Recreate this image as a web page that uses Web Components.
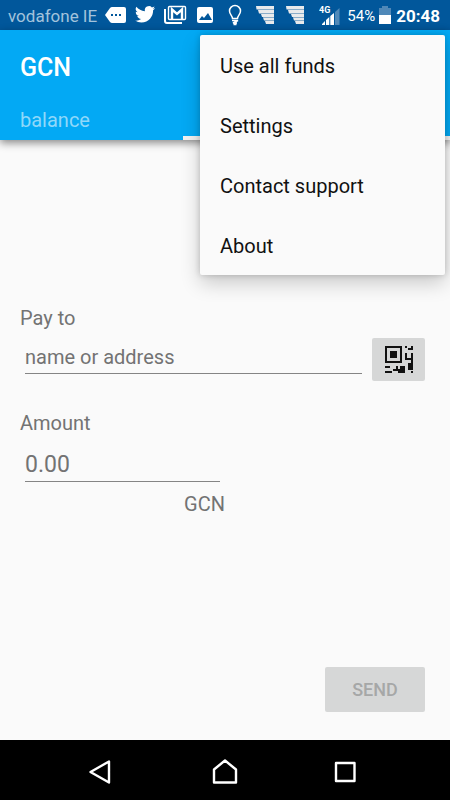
<!DOCTYPE html>
<html lang="en">
<head>
<meta charset="utf-8">
<meta name="viewport" content="width=device-width, initial-scale=1">
<title>GCN wallet</title>
<style>
  body {
    margin: 0;
    font-family: Roboto, sans-serif;
    font-size: 20px;
    line-height: 24px;
    color: #737373;
    background: #fafafa;
  }
</style>
</head>
<body>
<wallet-app></wallet-app>

<script>
class StatusBar extends HTMLElement {
  constructor() {
    super();
    this.attachShadow({ mode: 'open' });
    this.shadowRoot.innerHTML = `
      <style>
        :host {
          display: flex;
          align-items: center;
          height: 30px;
          padding: 0 10px 0 8px;
          background: #01579b;
          color: #fff;
          white-space: nowrap;
        }
        svg { display: block; flex: none; }
        .carrier { width: 92px; padding-top: 2px; font-size: 17px; color: #a3c3dc; }
        .notes, .system { display: flex; align-items: center; }
        .system { margin-left: auto; padding-top: 1px; }
        .percent { margin: 0 4px 0 7px; font-size: 15px; }
        .clock { margin-left: 5px; font-size: 17px; font-weight: 700; }
      </style>
      <span class="carrier">vodafone IE</span>
      <div class="notes">
        <svg width="30" height="30" viewBox="0 0 30 30">
          <path fill="#fff" d="M5 15l5-7q1-1 2-1h12q2 0 2 2v12q0 2-2 2H12q-1 0-2-1z"/>
          <path fill="#01579b" d="M11 14h2v2h-2zM15 14h2v2h-2zM19 14h2v2h-2z"/>
        </svg>
        <svg width="30" height="30" viewBox="0 0 30 30">
          <g transform="translate(5 4.2) scale(.84)">
            <path fill="#fff" d="M23.95 4.57a10 10 0 0 1-2.82.77 4.96 4.96 0 0 0 2.16-2.72c-.95.55-2 .95-3.13 1.18a4.92 4.92 0 0 0-8.38 4.48C7.69 8.09 4.07 6.13 1.64 3.16a4.92 4.92 0 0 0 1.52 6.57 4.9 4.9 0 0 1-2.23-.61v.06a4.92 4.92 0 0 0 3.95 4.83 5 5 0 0 1-2.21.08 4.94 4.94 0 0 0 4.6 3.42A9.87 9.87 0 0 1 0 19.54a14 14 0 0 0 7.55 2.21c9.05 0 14-7.5 14-13.98 0-.21 0-.42-.02-.63a9.94 9.94 0 0 0 2.46-2.55z"/>
          </g>
        </svg>
        <svg width="30" height="30" viewBox="0 0 30 30" fill="none" stroke="#fff">
          <path stroke-width="2" d="M5 9v12q0 2 2 2h15"/>
          <rect x="8.5" y="6.5" width="17" height="13" rx="1" stroke-width="1.4"/>
          <path stroke-width="2.4" d="M12 19V9.500l5 4.500 5-4.500V19"/>
        </svg>
        <svg width="30" height="30" viewBox="0 0 30 30">
          <rect x="7" y="7" width="16" height="16" rx="2" fill="#fff"/>
          <path fill="#01579b" d="M9 20l3-4 2 2 4-5 4 7z"/>
        </svg>
        <svg width="30" height="30" viewBox="0 0 30 30" fill="none" stroke="#fff" stroke-width="1.5">
          <path d="M12.500 18.500c0-3-3-4-3-7.500a5.500 5.500 0 0 1 11 0c0 3.500-3 4.500-3 7.500z"/>
          <path d="M12 20.500h6l-5 2.500h4M13.500 24.500h3"/>
        </svg>
        <svg width="30" height="30" viewBox="0 0 30 30" fill="#e8eaec">
          <path d="M6 6h18v3.400H6.500zM8 10h16v3.400H9zM11 14h13v3H12zM13 17.600h11v2.800H14zM15 21h9v3h-8z"/>
          <path fill="#9fb9d0" d="M8 9.400h16v.6H8zM10 13.400h14v.6H10zM13 17h11v.6H13zM15 20.400h9v.6h-9z"/>
        </svg>
        <svg width="30" height="30" viewBox="0 0 30 30" fill="#e8eaec">
          <path d="M6 6h18v3.400H6.500zM8 10h16v3.400H9zM11 14h13v3H12zM13 17.600h11v2.800H14zM15 21h9v3h-8z"/>
          <path fill="#9fb9d0" d="M8 9.400h16v.6H8zM10 13.400h14v.6H10zM13 17h11v.6H13zM15 20.400h9v.6h-9z"/>
        </svg>
      </div>
      <div class="system">
        <svg width="21" height="30" viewBox="0 0 21 30">
          <path fill="#fff" d="M3 24v-1l3-3v4zM7 24v-5l3.300-3v8zM11.300 24v-9l3.700-3v12z"/>
          <path fill="#5089b9" d="M16 24V11l4.500-4v17z"/>
          <text x="0" y="12" fill="#fff" font-size="9" font-weight="700">4G</text>
        </svg>
        <span class="percent">54%</span>
        <svg width="12" height="30" viewBox="0 0 12 30">
          <path fill="#4f88b8" d="M3 5h6v2h3v7H0V7h3z"/>
          <path fill="#fff" d="M0 14h12v9H0z"/>
        </svg>
        <span class="clock">20:48</span>
      </div>
    `;
  }
}

class AppHeader extends HTMLElement {
  constructor() {
    super();
    this.attachShadow({ mode: 'open' });
    this.shadowRoot.innerHTML = `
      <style>
        :host {
          display: flex;
          flex-direction: column;
          height: 110px;
          background: #03a9f4;
          color: #fff;
          box-shadow: 0 3px 8px rgba(0, 0, 0, .45);
        }
        h1 {
          flex: 1;
          margin: 0;
          padding: 23px 20px 0;
          font-size: 25px;
          line-height: 30px;
          font-weight: 500;
        }
        nav {
          display: grid;
          grid-template-columns: 183px 1fr;
        }
        a {
          padding: 0 20px 4px;
          line-height: 32px;
          color: #8fd8fa;
          text-decoration: none;
        }
        a.current { padding-bottom: 0; border-bottom: 4px solid #f2f2f2; }
      </style>
      <h1><slot></slot></h1>
      <nav>
        <a href="#balance">balance</a>
        <a class="current" href="#send" aria-current="page"></a>
      </nav>
    `;
  }
}

class OverflowMenu extends HTMLElement {
  constructor() {
    super();
    this.attachShadow({ mode: 'open' });
    this.shadowRoot.innerHTML = `
      <style>
        :host {
          display: block;
          border-radius: 2px;
          background: #fafafa;
          color: #111;
          box-shadow: 0 8px 20px rgba(0, 0, 0, .2), 0 0 6px rgba(0, 0, 0, .18);
        }
      </style>
      <slot></slot>
    `;
  }
}

class MenuEntry extends HTMLElement {
  constructor() {
    super();
    this.attachShadow({ mode: 'open' });
    this.shadowRoot.innerHTML = `
      <style>
        :host { display: block; }
        button {
          width: 100%;
          height: 60px;
          padding: 2px 20px 0;
          border: 0;
          background: none;
          font: inherit;
          color: inherit;
          text-align: left;
          cursor: pointer;
        }
      </style>
      <button type="button"><slot></slot></button>
    `;
  }
}

class SendForm extends HTMLElement {
  constructor() {
    super();
    this.attachShadow({ mode: 'open' });
    this.shadowRoot.innerHTML = `
      <style>
        :host { display: flex; flex: 1; }
        form {
          display: flex;
          flex: 1;
          flex-direction: column;
          padding: 166px 25px 28px 20px;
        }
        .row { display: flex; gap: 10px; margin: 8px 0 30px; }
        input {
          flex: 1;
          min-width: 0;
          height: 36px;
          box-sizing: border-box;
          margin: 0 0 0 5px;
          padding: 2px 0 0;
          border: 0;
          border-bottom: 1px solid #858585;
          border-radius: 0;
          outline: none;
          background: none;
          font: inherit;
          color: inherit;
        }
        input::placeholder { color: inherit; opacity: 1; }
        .amount { width: 205px; display: flex; flex-direction: column; }
        .amount div { display: flex; padding: 11px 5px 10px 0; }
        .amount input { font-size: 23px; }
        .unit { align-self: flex-end; }
        button {
          display: flex;
          align-items: center;
          justify-content: center;
          padding: 0;
          border: 0;
          border-radius: 2px;
          background: #d6d7d7;
        }
        .scan { width: 53px; height: 43px; }
        .send {
          width: 100px;
          height: 45px;
          margin: auto 0 0 auto;
          font: 500 18px/24px Roboto, sans-serif;
          color: #a6a7a7;
        }
      </style>
      <form>
        <label for="payee">Pay to</label>
        <div class="row">
          <input id="payee" type="text" placeholder="name or address">
          <button class="scan" type="button" aria-label="Scan code">
            <svg width="28" height="28" viewBox="0 0 28 28" fill="#111" shape-rendering="crispEdges">
              <path fill-rule="evenodd" d="M0 0h17v17H0zM2 2v13h13V2zM5 5h7v7H5z"/>
              <path d="M20 0h2v2h-2zM26 0h2v4h-5V2h3zM20 7h2v5h4V7h2v17h-2v-4h-3v-3h3v-3h-6zM23 18h3v6h-3zM26 25h2v2h-2zM0 20h5v2H0zM0 25h7v2H0zM8 23h3v-3h2v3h2v-3h5v7h-7v-2H8z"/>
            </svg>
          </button>
        </div>
        <label for="amount">Amount</label>
        <div class="amount">
          <div><input id="amount" type="text" inputmode="decimal" placeholder="0.00"></div>
          <span class="unit">GCN</span>
        </div>
        <button class="send" type="submit" disabled>SEND</button>
      </form>
    `;
  }
}

class NavBar extends HTMLElement {
  constructor() {
    super();
    this.attachShadow({ mode: 'open' });
    this.shadowRoot.innerHTML = `
      <style>
        :host {
          display: flex;
          justify-content: center;
          gap: 60px;
          height: 60px;
          background: #000;
        }
        button {
          width: 60px;
          padding: 0;
          border: 0;
          background: none;
        }
        svg {
          display: block;
          margin: auto;
          overflow: visible;
          fill: none;
          stroke: #fff;
          stroke-width: 2.4;
          stroke-linejoin: round;
        }
      </style>
      <button type="button" aria-label="Back">
        <svg width="30" height="30" viewBox="0 0 30 30"><path d="M.5 17L19 6.500V27.500z"/></svg>
      </button>
      <button type="button" aria-label="Home">
        <svg width="30" height="30" viewBox="0 0 30 30"><path d="M4 27.500V14.500L15 5.500l11 9v13z"/></svg>
      </button>
      <button type="button" aria-label="Recent apps">
        <svg width="30" height="30" viewBox="0 0 30 30"><path d="M6 8h18.500v18H6z"/></svg>
      </button>
    `;
  }
}

class WalletApp extends HTMLElement {
  constructor() {
    super();
    this.attachShadow({ mode: 'open' });
    this.shadowRoot.innerHTML = `
      <style>
        :host {
          position: relative;
          display: flex;
          flex-direction: column;
          min-height: 100vh;
        }
        /* the open menu lies over the header and the form */
        overflow-menu {
          position: absolute;
          top: 35px;
          right: 5px;
          width: 245px;
        }
      </style>
      <status-bar></status-bar>
      <app-header>GCN</app-header>
      <send-form></send-form>
      <nav-bar></nav-bar>
      <overflow-menu>
        <menu-entry>Use all funds</menu-entry>
        <menu-entry>Settings</menu-entry>
        <menu-entry>Contact support</menu-entry>
        <menu-entry>About</menu-entry>
      </overflow-menu>
    `;
  }
}

customElements.define('status-bar', StatusBar);
customElements.define('app-header', AppHeader);
customElements.define('overflow-menu', OverflowMenu);
customElements.define('menu-entry', MenuEntry);
customElements.define('send-form', SendForm);
customElements.define('nav-bar', NavBar);
customElements.define('wallet-app', WalletApp);
</script>
</body>
</html>
